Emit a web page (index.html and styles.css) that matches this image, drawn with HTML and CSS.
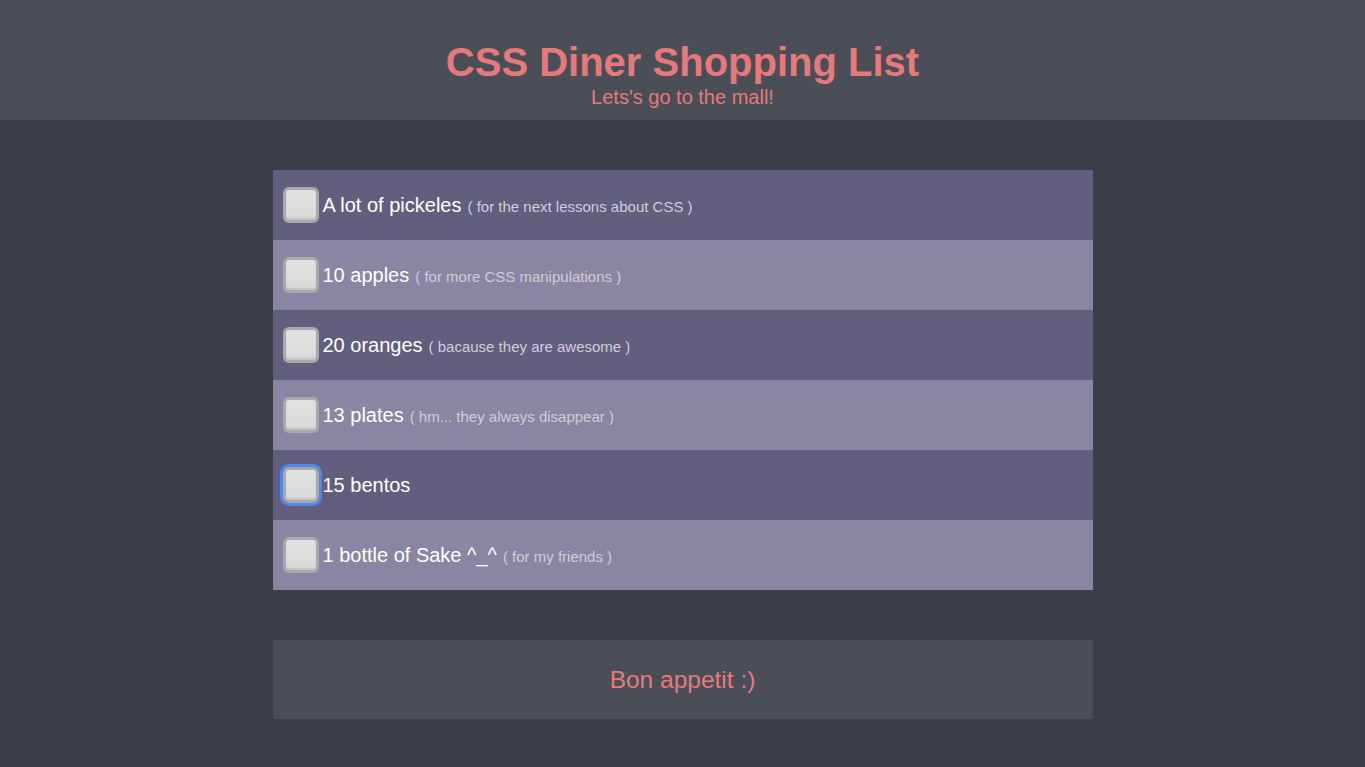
FILE: index.html
```html
<!DOCTYPE html>
<html>
<head>
<meta charset="utf-8">
<link rel="stylesheet" href="styles.css">
</head>
<body>
<header class="top">
  <h1 class="title">CSS Diner Shopping List</h1>
  <p class="subtitle">Lets's go to the mall!</p>
</header>
<main class="main">
  <ul class="list">
    <li class="item dark"><span class="box"></span><span class="name">A lot of pickeles</span><span class="note">( for the next lessons about CSS )</span></li>
    <li class="item light"><span class="box"></span><span class="name">10 apples</span><span class="note">( for more CSS manipulations )</span></li>
    <li class="item dark"><span class="box"></span><span class="name">20 oranges</span><span class="note">( bacause they are awesome )</span></li>
    <li class="item light"><span class="box"></span><span class="name">13 plates</span><span class="note">( hm... they always disappear )</span></li>
    <li class="item dark"><span class="box focus"></span><span class="name">15 bentos</span></li>
    <li class="item light"><span class="box"></span><span class="name">1 bottle of Sake ^_^</span><span class="note">( for my friends )</span></li>
  </ul>
  <footer class="foot">Bon appetit :)</footer>
</main>
</body>
</html>
```
FILE: styles.css
```css
html, body {
  margin: 0;
  padding: 0;
}
body {
  background: #3b3e46;
  font-family: "Liberation Sans", Arial, sans-serif;
}
.top {
  background: #4a4e56;
  height: 120px;
  display: flex;
  flex-direction: column;
  align-items: center;
  padding-top: 40px;
  box-sizing: border-box;
}
.title {
  margin: 0;
  color: #e8797a;
  font-size: 40px;
  font-weight: bold;
  line-height: 44px;
}
.subtitle {
  margin: 2px 0 0;
  color: #e8797a;
  font-size: 20px;
  line-height: 22px;
}
.main {
  width: 820px;
  margin: 50px auto 0;
}
.list {
  list-style: none;
  margin: 0;
  padding: 0;
}
.item {
  height: 70px;
  display: flex;
  align-items: center;
  padding-left: 10px;
  box-sizing: border-box;
}
.dark { background: #625e7e; }
.light { background: #8a85a2; }
.box {
  width: 36px;
  height: 36px;
  box-sizing: border-box;
  border: 3px solid #a8a8ae;
  border-radius: 6px;
  background: linear-gradient(#e2e2e2, #d9d9d9);
  box-shadow: inset 0 -2px 1px #c4c4c4;
  margin: 0 4px 0 0;
}
.box.focus {
  box-shadow: inset 0 -2px 1px #c4c4c4, 0 0 0 3px #4f88ec;
}
.name {
  color: #ffffff;
  font-size: 20px;
}
.note {
  color: #d0ccdc;
  font-size: 15px;
  margin-left: 6px;
  position: relative;
  top: 1px;
}
.foot {
  margin-top: 50px;
  height: 79px;
  background: #4a4e56;
  color: #e8797a;
  font-size: 24.5px;
  display: flex;
  align-items: center;
  justify-content: center;
}
```
